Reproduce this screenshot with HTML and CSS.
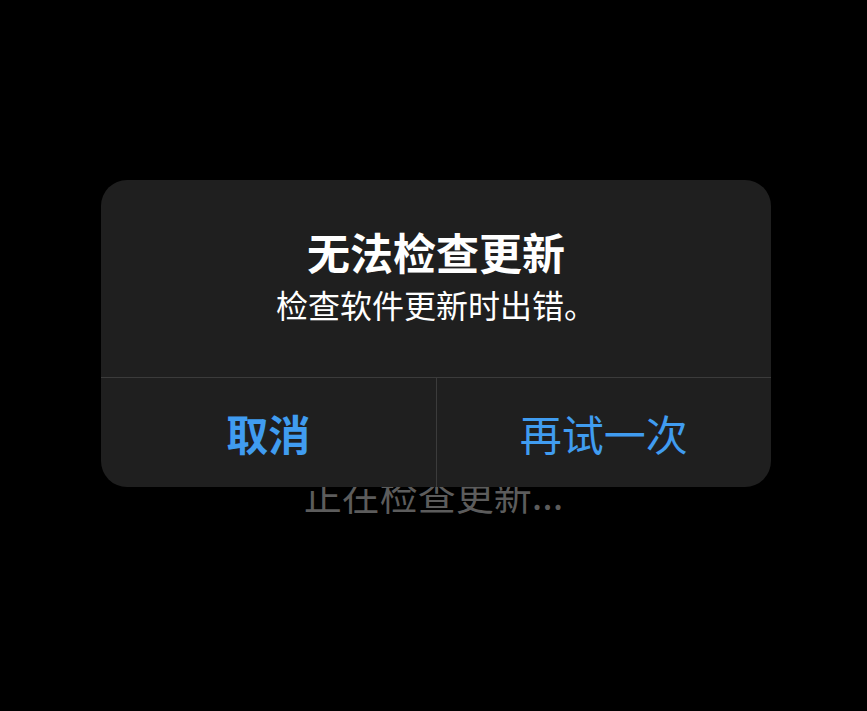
FILE: index.html
```html
<!DOCTYPE html>
<html>
<head>
    <title>检查更新</title>
    <link rel="stylesheet" href="styles.css">
</head>
<body>
    <div class="screen">
        <p class="status">正在检查更新...</p>

        <div class="alert">
            <div class="alert-body">
                <p class="alert-title">无法检查更新</p>
                <p class="alert-text">检查软件更新时出错。</p>
            </div>
            <div class="alert-actions">
                <div class="action bold">取消</div>
                <div class="action">再试一次</div>
            </div>
        </div>
    </div>
</body>
</html>
```

FILE: styles.css
```css
body{
    margin: 0;
    background-color: #000;
    font-family: "Noto Sans CJK SC", "Noto Sans", sans-serif;
}
p{
    margin: 0;
}
.screen{
    position: relative;
    width: 867px;
    height: 711px;
    overflow: hidden;
}
.status{
    padding-top: 469px;
    text-align: center;
    font-size: 38px;
    line-height: 50px;
    color: #5c5c5c;
}
.alert{
    position: absolute;
    left: 101px;
    top: 180px;
    width: 670px;
    height: 307px;
    background-color: #1f1f1f;
    border-radius: 26px;
    display: flex;
    flex-direction: column;
    overflow: hidden;
}
.alert-body{
    height: 198px;
    box-sizing: border-box;
    padding-top: 46px;
    text-align: center;
    color: #fff;
    border-bottom: 1px solid #3b3b3b;
}
.alert-title{
    font-size: 43px;
    line-height: 50px;
    font-weight: 700;
}
.alert-text{
    margin-top: 8px;
    font-size: 32px;
    line-height: 40px;
}
.alert-actions{
    flex: 1;
    display: flex;
}
.action{
    flex: 1;
    display: flex;
    align-items: center;
    justify-content: center;
    font-size: 42px;
    color: #409cf0;
}
.action + .action{
    border-left: 1px solid #3b3b3b;
}
.bold{
    font-weight: 700;
}
```
